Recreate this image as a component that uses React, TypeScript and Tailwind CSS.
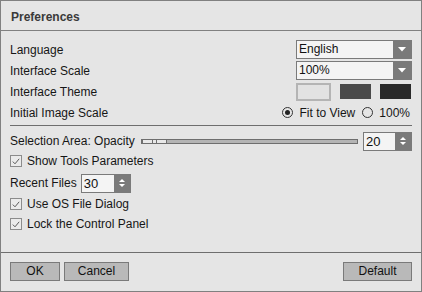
import React from "react";

const Arrow = () => (
  <svg width="8" height="5" viewBox="0 0 8 5">
    <polygon points="0,0 8,0 4,4.5" fill="#ffffff" />
  </svg>
);

function Dropdown({ value }: { value: string }) {
  return (
    <div className="flex h-[19px] w-[116px] border border-[#7a7a7a] bg-[#f4f4f4]">
      <div className="flex-1 pl-[2px] leading-[17px] text-[#111]">{value}</div>
      <div className="flex w-[18px] items-center justify-center bg-[#7a7a7a]">
        <Arrow />
      </div>
    </div>
  );
}

function Spin({ value, className }: { value: string; className: string }) {
  return (
    <div className={`flex h-[19px] border border-[#7a7a7a] bg-[#f4f4f4] ${className}`}>
      <div className="flex-1 pl-[2px] text-[13px] leading-[17px] text-[#111]">{value}</div>
      <div className="flex w-[16px] flex-col items-center justify-center gap-[2px] bg-[#7a7a7a]">
        <svg width="6" height="3" viewBox="0 0 6 3">
          <polygon points="0,3 6,3 3,0" fill="#ffffff" />
        </svg>
        <svg width="6" height="3" viewBox="0 0 6 3">
          <polygon points="0,0 6,0 3,3" fill="#ffffff" />
        </svg>
      </div>
    </div>
  );
}

function Check({ label }: { label: string }) {
  return (
    <div className="flex items-center gap-[5px]">
      <span className="flex h-[12px] w-[12px] items-center justify-center border border-[#8c8c8c] bg-[#ebebeb]">
        <svg width="8" height="7" viewBox="0 0 8 7">
          <polyline points="0.8,3.6 3,5.8 7.2,0.8" stroke="#5a5a5a" strokeWidth="1" fill="none" />
        </svg>
      </span>
      <span>{label}</span>
    </div>
  );
}

function Radio({ checked, label }: { checked?: boolean; label: string }) {
  return (
    <div className="flex items-center gap-[6px]">
      <span className="flex h-[11px] w-[11px] items-center justify-center rounded-full border border-[#333]">
        {checked && <span className="h-[5px] w-[5px] rounded-full bg-[#222]" />}
      </span>
      <span>{label}</span>
    </div>
  );
}

function Button({ label, className }: { label: string; className: string }) {
  return (
    <button className={`h-[19px] border border-[#7a7a7a] bg-[#b9b9b9] text-[12px] leading-[17px] text-[#111] ${className}`}>
      {label}
    </button>
  );
}

export default function App() {
  return (
    <div className="flex h-[292px] w-[422px] flex-col border border-[#808080] bg-[#e5e5e5] font-['Liberation_Sans',Arial,sans-serif] text-[12px] text-[#161616]">
      {/* Title bar */}
      <div className="flex h-[30px] items-center border-b border-[#808080] pl-[10px] pt-[2px] text-[12px] font-bold text-[#3a3a3a]">
        Preferences
      </div>

      {/* Body */}
      <div className="flex flex-1 flex-col px-[9px] pt-[8px]">
        <div className="flex h-[21px] items-center justify-between">
          <span>Language</span>
          <Dropdown value="English" />
        </div>
        <div className="flex h-[21px] items-center justify-between">
          <span>Interface Scale</span>
          <Dropdown value="100%" />
        </div>
        <div className="flex h-[21px] items-center justify-between">
          <span>Interface Theme</span>
          <div className="flex gap-[7px]">
            <div className="flex h-[18px] w-[35px] items-center justify-center border-2 border-[#b4b4b4] bg-[#e2e2e2]" />
            <div className="flex h-[18px] w-[34px] items-center justify-center">
              <div className="h-[15px] w-[31px] bg-[#4a4a4a]" />
            </div>
            <div className="flex h-[18px] w-[33px] items-center justify-center">
              <div className="h-[15px] w-[31px] bg-[#2a2a2a]" />
            </div>
          </div>
        </div>
        <div className="flex h-[21px] items-center justify-between">
          <span>Initial Image Scale</span>
          <div className="flex items-center gap-[7px] pr-[2px]">
            <Radio checked label="Fit to View" />
            <Radio label="100%" />
          </div>
        </div>

        <div className="mt-[2px] h-px bg-[#6e6e6e]" />

        <div className="mt-[5px] flex h-[20px] items-center">
          <span>Selection Area: Opacity</span>
          <div className="relative ml-[6px] h-[5px] flex-1 border border-[#6e6e6e] bg-[#b4b4b4]">
            <div className="absolute left-0 top-[-1px] flex h-[5px] w-[25px] items-center justify-center gap-[3px] border border-[#6e6e6e] bg-[#e8e8e8]">
              <span className="h-[3px] w-px bg-[#6e6e6e]" />
              <span className="h-[3px] w-px bg-[#6e6e6e]" />
            </div>
          </div>
          <Spin value="20" className="ml-[5px] w-[49px]" />
        </div>
        <div className="flex h-[20px] items-center">
          <Check label="Show Tools Parameters" />
        </div>
        <div className="mt-px flex h-[22px] items-center">
          <span>Recent Files</span>
          <Spin value="30" className="ml-[4px] w-[50px]" />
        </div>
        <div className="flex h-[20px] items-center">
          <Check label="Use OS File Dialog" />
        </div>
        <div className="flex h-[20px] items-center">
          <Check label="Lock the Control Panel" />
        </div>
      </div>

      {/* Footer */}
      <div className="flex h-[39px] items-start justify-between border-t border-[#6e6e6e] px-[9px] pt-[9px]">
        <div className="flex gap-[4px]">
          <Button label="OK" className="w-[50px]" />
          <Button label="Cancel" className="w-[65px]" />
        </div>
        <Button label="Default" className="w-[69px]" />
      </div>
    </div>
  );
}
